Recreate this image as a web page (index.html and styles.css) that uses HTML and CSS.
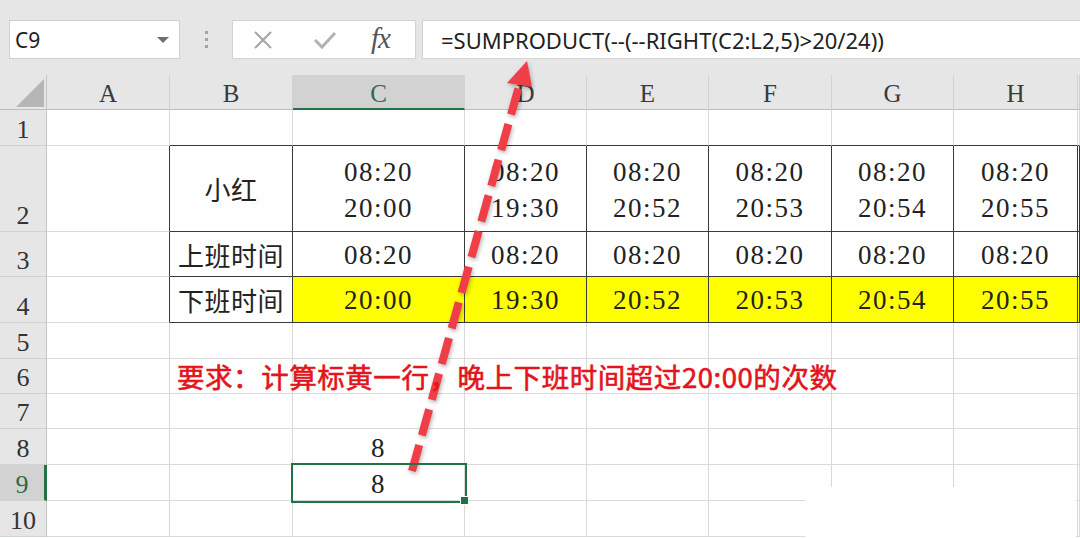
FILE: index.html
```html
<!DOCTYPE html>
<html lang="zh-CN">
<head>
<meta charset="utf-8">
<title>Excel</title>
<link rel="stylesheet" href="styles.css">
</head>
<body>
<div class="app">
  <div class="toolbar">
    <div class="namebox"><span class="nb-text">C9</span><span class="nb-caret"></span></div>
    <div class="grip"><i></i><i></i><i></i></div>
    <div class="fbtns">
      <svg class="ico-x" width="20" height="20" viewBox="0 0 20 20"><path d="M2 2 L18 18 M18 2 L2 18" stroke="#a3a3a3" stroke-width="2" fill="none"/></svg>
      <svg class="ico-ok" width="24" height="20" viewBox="0 0 24 20"><path d="M2 10 L9 17 L22 3" stroke="#b3b3b3" stroke-width="3" fill="none"/></svg>
      <span class="fx">fx</span>
    </div>
    <div class="finput">=SUMPRODUCT(--(--RIGHT(C2:L2,5)&gt;20/24))</div>
  </div>

  <div class="sheet">
    <!-- header row -->
    <div class="c corner"><span class="tri"></span></div>
    <div class="c ch">A</div>
    <div class="c ch">B</div>
    <div class="c ch sel">C</div>
    <div class="c ch">D</div>
    <div class="c ch">E</div>
    <div class="c ch">F</div>
    <div class="c ch">G</div>
    <div class="c ch">H</div>
    <div class="c ch"></div>

    <!-- row 1 -->
    <div class="c rh">1</div>
    <div class="c"></div>
    <div class="c tb"></div>
    <div class="c tb"></div>
    <div class="c tb"></div>
    <div class="c tb"></div>
    <div class="c tb"></div>
    <div class="c tb"></div>
    <div class="c tb"></div>
    <div class="c tb"></div>

    <!-- row 2 -->
    <div class="c rh">2</div>
    <div class="c tr"></div>
    <div class="c t cjk">小红</div>
    <div class="c t num two">08:20<br>20:00</div>
    <div class="c t num two">08:20<br>19:30</div>
    <div class="c t num two">08:20<br>20:52</div>
    <div class="c t num two">08:20<br>20:53</div>
    <div class="c t num two">08:20<br>20:54</div>
    <div class="c t num two">08:20<br>20:55</div>
    <div class="c t"></div>

    <!-- row 3 -->
    <div class="c rh">3</div>
    <div class="c tr"></div>
    <div class="c t cjk">上班时间</div>
    <div class="c t num">08:20</div>
    <div class="c t num">08:20</div>
    <div class="c t num">08:20</div>
    <div class="c t num">08:20</div>
    <div class="c t num">08:20</div>
    <div class="c t num">08:20</div>
    <div class="c t"></div>

    <!-- row 4 -->
    <div class="c rh">4</div>
    <div class="c tr"></div>
    <div class="c t cjk">下班时间</div>
    <div class="c t y num">20:00</div>
    <div class="c t y num">19:30</div>
    <div class="c t y num">20:52</div>
    <div class="c t y num">20:53</div>
    <div class="c t y num">20:54</div>
    <div class="c t y num">20:55</div>
    <div class="c t y"></div>

    <!-- row 5 -->
    <div class="c rh">5</div>
    <div class="c"></div><div class="c"></div><div class="c"></div><div class="c"></div>
    <div class="c"></div><div class="c"></div><div class="c"></div><div class="c"></div><div class="c"></div>

    <!-- row 6 -->
    <div class="c rh">6</div>
    <div class="c"></div>
    <div class="c note-cell"><span class="note">要求：计算标黄一行，晚上下班时间超过20:00的次数</span></div>
    <div class="c"></div><div class="c"></div><div class="c"></div><div class="c"></div><div class="c"></div><div class="c"></div><div class="c"></div>

    <!-- row 7 -->
    <div class="c rh">7</div>
    <div class="c"></div><div class="c"></div><div class="c"></div><div class="c"></div>
    <div class="c"></div><div class="c"></div><div class="c"></div><div class="c"></div><div class="c"></div>

    <!-- row 8 -->
    <div class="c rh">8</div>
    <div class="c"></div><div class="c"></div>
    <div class="c num val">8</div>
    <div class="c"></div><div class="c"></div><div class="c"></div><div class="c"></div><div class="c"></div><div class="c"></div>

    <!-- row 9 -->
    <div class="c rh rsel">9</div>
    <div class="c"></div><div class="c"></div>
    <div class="c num val active">8</div>
    <div class="c"></div><div class="c"></div><div class="c"></div><div class="c"></div><div class="c"></div><div class="c"></div>

    <!-- row 10 -->
    <div class="c rh">10</div>
    <div class="c"></div><div class="c"></div><div class="c"></div><div class="c"></div>
    <div class="c"></div><div class="c"></div><div class="c"></div><div class="c"></div><div class="c"></div>
  </div>

  <div class="wipe"></div>

  <svg class="arrow" width="1080" height="538" viewBox="0 0 1080 538">
    <g class="arrow-g">
      <path d="M412 471 L519 86" stroke="#ef3e47" stroke-width="8" stroke-dasharray="27 10" fill="none"/>
      <polygon points="527,61 507,83 532,87" fill="#ef3e47"/>
    </g>
  </svg>
</div>
</body>
</html>
```

FILE: styles.css
```css
* { box-sizing: border-box; }
html, body { margin: 0; padding: 0; }
body {
  width: 1080px;
  height: 538px;
  overflow: hidden;
  background: #ffffff;
  font-family: "Liberation Serif", serif;
}
.app {
  position: relative;
  width: 1080px;
  height: 538px;
  overflow: hidden;
  background: #ffffff;
}

/* ---------- formula bar ---------- */
.toolbar {
  height: 75px;
  background: #e6e6e6;
  display: flex;
  align-items: flex-start;
  padding: 20px 0 0 9px;
}
.namebox {
  width: 171px;
  height: 39px;
  background: #ffffff;
  border: 1px solid #cfcfcf;
  display: flex;
  align-items: center;
  justify-content: space-between;
  padding: 0 10px 0 5px;
}
.nb-text {
  font-family: "Noto Sans", "Open Sans", sans-serif;
  font-size: 21px;
  color: #222;
}
.nb-caret {
  width: 0;
  height: 0;
  border-left: 6px solid transparent;
  border-right: 6px solid transparent;
  border-top: 6px solid #707070;
}
.grip {
  width: 52px;
  height: 39px;
  display: flex;
  flex-direction: column;
  align-items: center;
  justify-content: center;
  gap: 4px;
}
.grip i {
  display: block;
  width: 3px;
  height: 3px;
  background: #a2a2a2;
}
.fbtns {
  width: 184px;
  height: 39px;
  background: #ffffff;
  border: 1px solid #d3d3d3;
  display: flex;
  align-items: center;
  padding-left: 20px;
}
.ico-x { margin-right: 40px; }
.ico-ok { margin-right: 34px; }
.fx {
  font-family: "Liberation Serif", serif;
  font-style: italic;
  font-size: 29px;
  line-height: 1;
  color: #555;
  letter-spacing: -1px;
  margin-top: -3px;
}
.finput {
  flex: 1;
  margin-left: 6px;
  height: 39px;
  background: #ffffff;
  border: 1px solid #d3d3d3;
  border-right: none;
  display: flex;
  align-items: center;
  padding-left: 18px;
  font-family: "Noto Sans", "Open Sans", sans-serif;
  font-size: 22px;
  color: #222;
  white-space: nowrap;
}

/* ---------- sheet grid ---------- */
.sheet {
  display: grid;
  grid-template-columns: 47px 123px 123px 172px 122px 122px 123px 122px 124px 1fr;
  grid-template-rows: 35px 36px 86px 45px 46px 36px 35px 35px 36px 36px 36px;
}
.c {
  border-right: 1px solid #dadada;
  border-bottom: 1px solid #dadada;
  display: flex;
  align-items: center;
  justify-content: center;
  min-width: 0;
  color: #1c1c1c;
}
.corner {
  background: #e6e6e6;
  border-right: 1px solid #c4c4c4;
  border-bottom: 1px solid #bcbcbc;
  align-items: flex-end;
  justify-content: flex-end;
  padding: 0 2px 2px 0;
}
.tri {
  width: 28px;
  height: 28px;
  background: #b6b6b6;
  clip-path: polygon(100% 0, 100% 100%, 0 100%);
}
.ch {
  background: #e6e6e6;
  border-right: 1px solid #d2d2d2;
  border-bottom: 1px solid #bcbcbc;
  font-family: "Liberation Serif", serif;
  font-size: 25px;
  color: #3a3a3a;
  padding-top: 4px;
}
.ch.sel {
  background: #d2d2d2;
  color: #2f6b47;
  border-bottom: 2px solid #217346;
}
.rh {
  background: #e6e6e6;
  border-right: 1px solid #c4c4c4;
  border-bottom: 1px solid #d2d2d2;
  align-items: flex-end;
  padding-bottom: 1px;
  font-family: "Liberation Serif", serif;
  font-size: 26px;
  line-height: 28px;
  color: #333;
}
.rh.rsel {
  background: #d2d2d2;
  color: #2f6b47;
  border-right: 3px solid #217346;
}

/* table borders */
.tb { border-bottom-color: #3a3a3a; }
.tr { border-right-color: #3a3a3a; }
.t {
  border-right-color: #3a3a3a;
  border-bottom-color: #3a3a3a;
}
.y { background: #ffff00; }

.num {
  font-family: "Liberation Serif", "Times New Roman", serif;
  font-size: 27px;
  letter-spacing: 1.5px;
  color: #222;
  padding-top: 2px;
}
.two {
  flex-direction: column;
  line-height: 36px;
  text-align: center;
}
.cjk {
  font-family: "Noto Sans CJK SC", sans-serif;
  font-size: 26px;
  color: #222;
  letter-spacing: 0.5px;
}
.val { padding-top: 4px; }

.note-cell {
  justify-content: flex-start;
  overflow: visible;
  position: relative;
  z-index: 1;
}
.note {
  white-space: nowrap;
  padding-left: 7px;
  font-family: "Noto Sans CJK SC", sans-serif;
  font-weight: 400;
  -webkit-text-stroke: 0.6px #e3151c;
  font-size: 27.5px;
  letter-spacing: 0.55px;
  color: #e3151c;
}

.active {
  position: relative;
  z-index: 2;
  outline: 2px solid #217346;
  outline-offset: 0;
}
.active::after {
  content: "";
  position: absolute;
  right: -5px;
  bottom: -5px;
  width: 7px;
  height: 7px;
  background: #217346;
  border: 1px solid #ffffff;
}

/* overlays */
.wipe {
  position: absolute;
  left: 805px;
  top: 487px;
  width: 271px;
  height: 51px;
  background: #ffffff;
}
.arrow {
  position: absolute;
  left: 0;
  top: 0;
  pointer-events: none;
}
.arrow-g {
  filter: drop-shadow(1px 2px 2px rgba(0,0,0,0.3));
}
```
